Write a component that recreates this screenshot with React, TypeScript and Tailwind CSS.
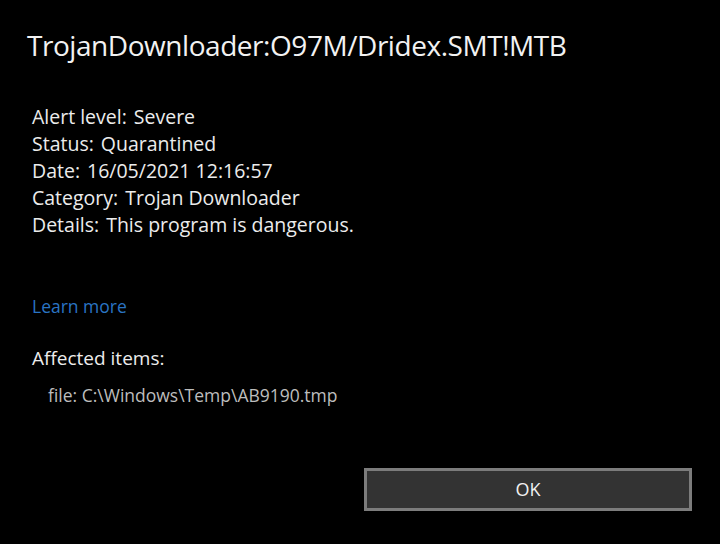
export default function App() {
  const rows = [
    ["Alert level:", "Severe"],
    ["Status:", "Quarantined"],
    ["Date:", "16/05/2021 12:16:57"],
    ["Category:", "Trojan Downloader"],
    ["Details:", "This program is dangerous."],
  ];
  return (
    <div className="w-[720px] h-[544px] bg-black text-white flex flex-col font-['Open_Sans',sans-serif] overflow-hidden">
      <h1 className="pl-[27px] pt-[27px] text-[28px] leading-[36px] tracking-[-0.45px] text-[#f2f2f2]">
        TrojanDownloader:O97M/Dridex.SMT!MTB
      </h1>
      <div className="pl-[32px] pt-[40px] flex flex-col text-[19.5px] leading-[27px] text-[#ececec]">
        {rows.map(([k, v]) => (
          <div key={k} className="flex gap-[7px]">
            <span>{k}</span>
            <span>{v}</span>
          </div>
        ))}
      </div>
      <a href="#" className="pl-[32px] mt-[56px] text-[17.5px] leading-[24px] text-[#2a74c4]">
        Learn more
      </a>
      <div className="pl-[32px] mt-[27px] text-[19px] leading-[26px] text-[#ececec]">Affected items:</div>
      <div className="pl-[48px] mt-[12px] text-[17.5px] leading-[24px] text-[#bdbdbd]">
        file: C:\Windows\Temp\AB9190.tmp
      </div>
      <div className="flex justify-end pr-[28px] mt-auto pb-[33px]">
        <button className="w-[328px] h-[43px] bg-[#333333] border-[3px] border-[#7c7c7c] text-[#f0f0f0] text-[18px]">
          OK
        </button>
      </div>
    </div>
  );
}
